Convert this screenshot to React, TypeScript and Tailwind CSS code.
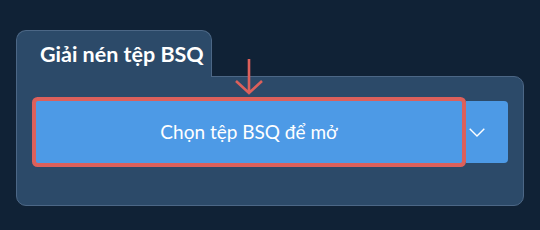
import React from "react";

export default function App() {
  return (
    <div className="relative w-[540px] h-[230px] bg-[#102236] px-4 pt-[30px] font-['Lato',sans-serif]">
      <div className="relative z-10 -mb-px w-[196px] h-[47px] rounded-t-[10px] border border-b-0 border-[#4c6786] bg-[#2c4a69] pl-[23px] pt-[9px]">
        <span className="text-[21.5px] font-bold text-white leading-[28px]">Giải nén tệp BSQ</span>
      </div>
      <div className="h-[130px] rounded-b-[10px] rounded-tr-[10px] border border-[#4c6786] bg-[#2c4a69] pl-[19px] pr-[15px] pt-[24px]">
        <div className="flex h-[62px]">
          <button className="flex-1 rounded-[2px] bg-[#4d9ae6] text-white text-[19px] font-normal shadow-[0_0_0_4px_#dc605b] flex items-center justify-center">
            Chọn tệp BSQ để mở
          </button>
          <div className="ml-1 w-[42px] rounded-r-[4px] bg-[#4d9ae6] flex items-center pl-[3px]">
            <svg width="16" height="9" viewBox="0 0 16 9" fill="none">
              <path d="M0.7 0.7 L8 8 L15.3 0.7" stroke="white" strokeWidth="1.4" />
            </svg>
          </div>
        </div>
      </div>
      <svg className="absolute left-[233px] top-[58px]" width="32" height="38" viewBox="0 0 32 38" fill="none">
        <path d="M16 1 V35 M3 23 L16 35 L29 23" stroke="#dc605b" strokeWidth="2.6" />
      </svg>
    </div>
  );
}
